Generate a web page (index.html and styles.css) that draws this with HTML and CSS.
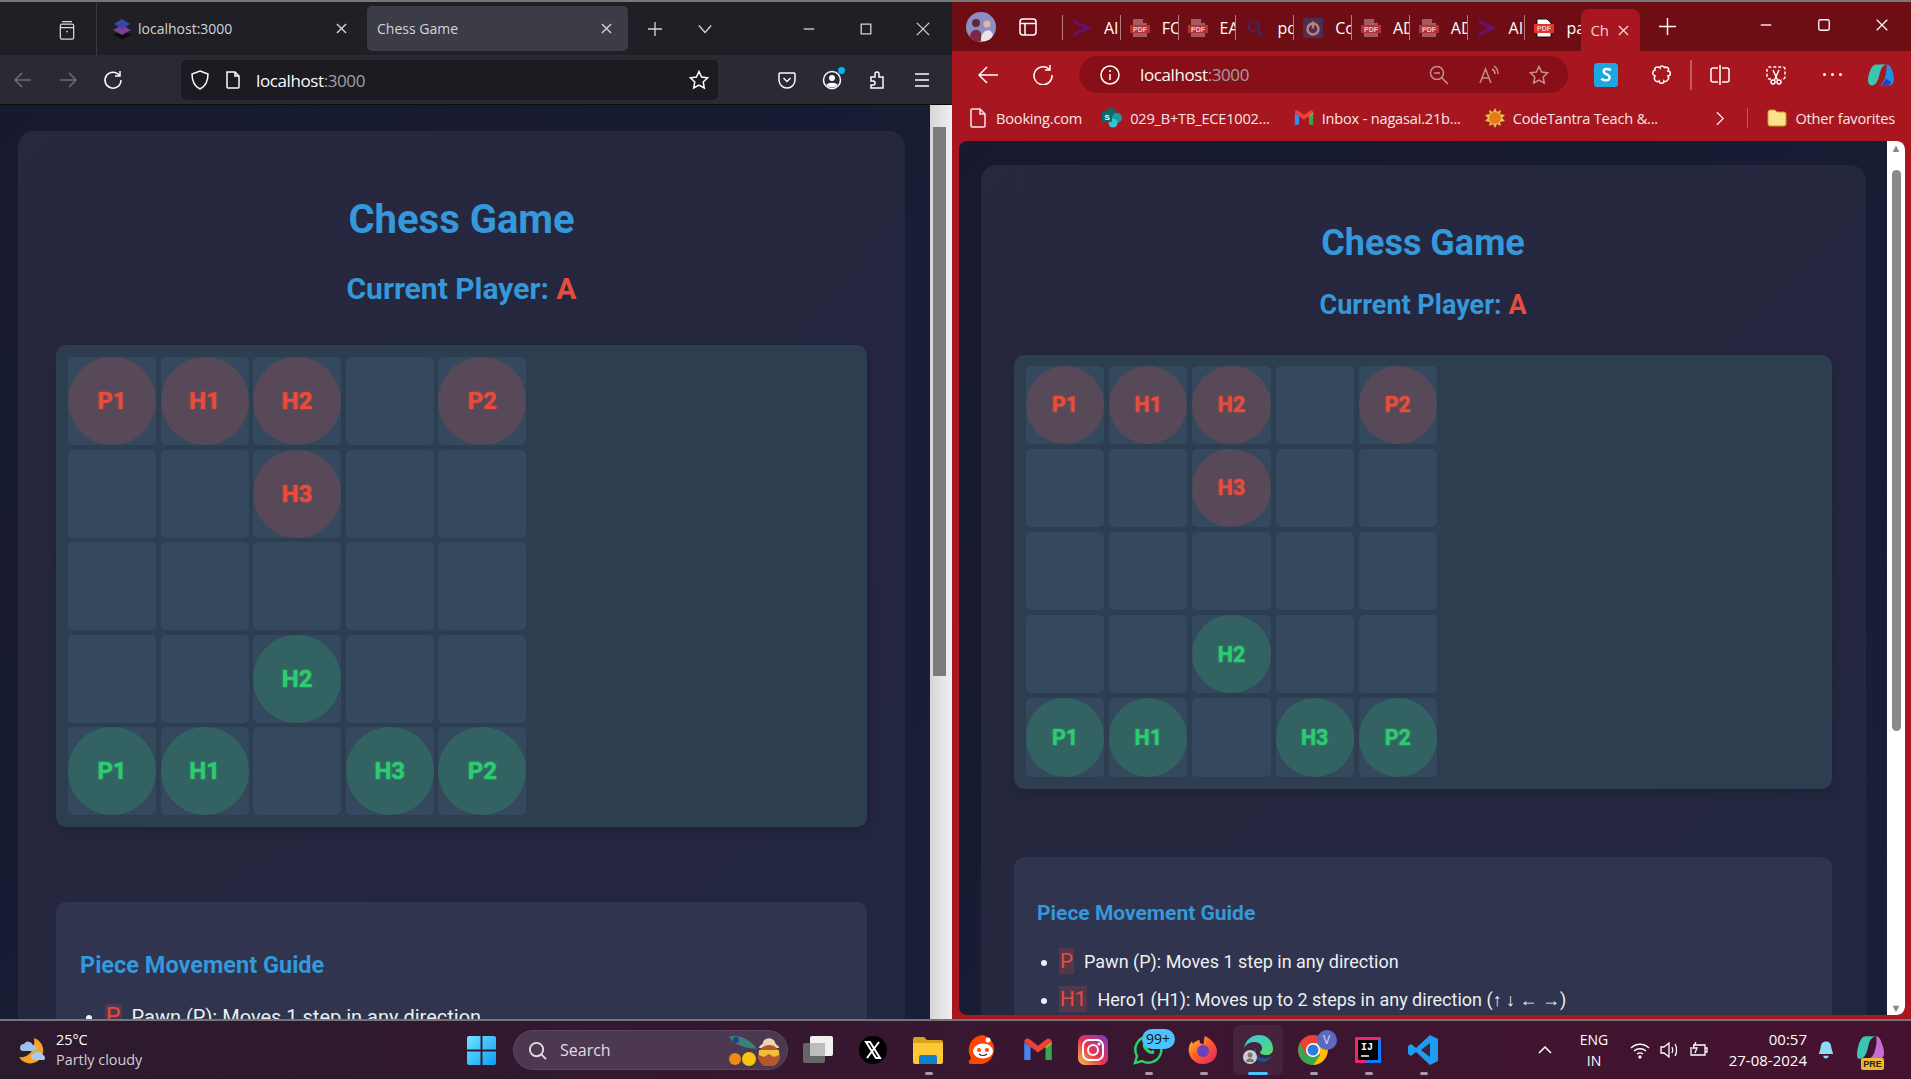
FILE: index.html
```html
<!DOCTYPE html>
<html lang="en">
<head>
    <meta charset="UTF-8">
    <title>Chess Game</title>
    <link rel="stylesheet" href="styles.css">
</head>
<body>
    <svg class="defs" width="0" height="0">
        <symbol id="pdf" viewBox="0 0 20 20">
            <path d="M3 1h10l4 4v14H3z" fill="#a35a60"/>
            <path d="M13 1v4h4z" fill="#6f0d14"/>
            <rect x="0" y="7" width="20" height="8" fill="#b3323a"/>
            <text x="10" y="13.6" text-anchor="middle" class="pdf-label">PDF</text>
        </symbol>
        <symbol id="vs" viewBox="0 0 20 20">
            <path d="M0 1l20 9L0 19l2-4 9-5-9-5z" fill="#68106f"/>
        </symbol>
        <symbol id="gmail" viewBox="0 0 24 20">
            <path d="M1 18V4l5 3.5V18z" fill="#4285f4"/>
            <path d="M23 18V4l-5 3.5V18z" fill="#34a853"/>
            <path d="M1 3.500C1 1 4 0 5.500 1.500L12 6.500l6.500-5C20 0 23 1 23 3.500L18 7.500l-6 4.500-6-4.500z" fill="#ea4335"/>
            <path d="M18 7.500l5-4V5l-5 3.500z" fill="#fbbc04"/>
        </symbol>
    </svg>

    <div class="desktop">
        <!-- left window: firefox -->
        <section class="window ff">
            <div class="ff-tabs">
                <div class="ff-side">
                    <svg class="ico" viewBox="0 0 20 24"><path d="M4 2h12M2 7a2 2 0 0 1 2-2h12a2 2 0 0 1 2 2v14a2 2 0 0 1-2 2H4a2 2 0 0 1-2-2zM2 9h16M9 14h2"/></svg>
                </div>
                <div class="ff-tab">
                    <svg class="fav-ico" viewBox="0 0 20 20"><path d="M10 11l9 5-9 4-9-4z" fill="#0b0b10"/><path d="M10 6l9 5-9 5-9-5z" fill="#7b3f98"/><path d="M10 0l8 5-8 5-8-5z" fill="#3b47a8"/></svg>
                    <span>localhost:3000</span>
                    <svg class="tab-x" viewBox="0 0 12 12"><path d="M1 1l10 10M11 1L1 11"/></svg>
                </div>
                <div class="ff-tab ff-tab-active">
                    <span>Chess Game</span>
                    <svg class="tab-x" viewBox="0 0 12 12"><path d="M1 1l10 10M11 1L1 11"/></svg>
                </div>
                <div class="ff-slot ff-plus"><svg class="ico-m" viewBox="0 0 16 16"><path d="M8 0v16M0 8h16"/></svg></div>
                <div class="ff-slot ff-more"><svg class="ico-m" viewBox="0 0 16 16"><path d="M1 4l7 8 7-8"/></svg></div>
                <div class="win-btns ff-btns">
                    <svg class="ico-m" viewBox="0 0 16 16"><path d="M2 8h12"/></svg>
                    <svg class="ico-m" viewBox="0 0 16 16"><path d="M2.500 2.500h11v11h-11z"/></svg>
                    <svg class="ico-m" viewBox="0 0 16 16"><path d="M1 1l14 14M15 1L1 15"/></svg>
                </div>
            </div>
            <div class="ff-toolbar">
                <div class="ff-nav ff-off"><svg class="ico" viewBox="0 0 20 20"><path d="M18 10H2M9 3l-7 7 7 7"/></svg></div>
                <div class="ff-nav ff-off"><svg class="ico" viewBox="0 0 20 20"><path d="M2 10h16M11 3l7 7-7 7"/></svg></div>
                <div class="ff-nav"><svg class="ico" viewBox="0 0 20 20"><path d="M16.500 5.500A8 8 0 1 0 18 10M17 1v5h-5"/></svg></div>
                <div class="ff-url">
                    <svg class="ico" viewBox="0 0 20 20"><path d="M10 1l8 3c0 7-2 12-8 15C4 16 2 11 2 4z"/></svg>
                    <svg class="ico" viewBox="0 0 20 20"><path d="M4 2h8l4 4v11a1 1 0 0 1-1 1H5a1 1 0 0 1-1-1zM12 2v4h4"/></svg>
                    <span class="url-text">localhost<i>:3000</i></span>
                    <svg class="ico ff-star" viewBox="0 0 20 20"><path d="M10 1.500l2.600 5.500 6 .8-4.400 4.200 1.100 6L10 15l-5.300 3 1.100-6L1.400 7.800l6-.8z"/></svg>
                </div>
                <div class="ff-right">
                    <div class="ff-tool"><svg class="ico" viewBox="0 0 20 20"><path d="M3 3h14a1 1 0 0 1 1 1v6a8 8 0 0 1-16 0V4a1 1 0 0 1 1-1zM6.500 8l3.500 3.500L13.500 8"/></svg></div>
                    <div class="ff-tool ff-profile">
                        <svg class="ico" viewBox="0 0 20 20"><circle cx="10" cy="10" r="8.500"/><circle cx="10" cy="8" r="3" class="solid"/><path d="M4.500 15c1-3 10-3 11 0-2 3-9 3-11 0z" class="solid"/></svg>
                        <span class="ff-dot"></span>
                    </div>
                    <div class="ff-tool"><svg class="ico" viewBox="0 0 20 20"><path d="M4 7h4V4a2 2 0 0 1 4 0v3h4v11H4v-3h2a2 2 0 0 0 0-4H4z"/></svg></div>
                    <div class="ff-tool"><svg class="ico" viewBox="0 0 20 20"><path d="M3 4h14M3 10h14M3 16h14"/></svg></div>
                </div>
            </div>
            <div class="ff-view">
                <main class="page page-wide">
                    <div class="game">
                        <h1>Chess Game</h1>
                        <h2>Current Player: <span class="red">A</span></h2>
                        <div class="board">
                            <div class="cell"><div class="piece a">P1</div></div>
                            <div class="cell"><div class="piece a">H1</div></div>
                            <div class="cell"><div class="piece a">H2</div></div>
                            <div class="cell"></div>
                            <div class="cell"><div class="piece a">P2</div></div>
                            <div class="cell"></div>
                            <div class="cell"></div>
                            <div class="cell"><div class="piece a">H3</div></div>
                            <div class="cell"></div>
                            <div class="cell"></div>
                            <div class="cell"></div>
                            <div class="cell"></div>
                            <div class="cell"></div>
                            <div class="cell"></div>
                            <div class="cell"></div>
                            <div class="cell"></div>
                            <div class="cell"></div>
                            <div class="cell"><div class="piece b">H2</div></div>
                            <div class="cell"></div>
                            <div class="cell"></div>
                            <div class="cell"><div class="piece b">P1</div></div>
                            <div class="cell"><div class="piece b">H1</div></div>
                            <div class="cell"></div>
                            <div class="cell"><div class="piece b">H3</div></div>
                            <div class="cell"><div class="piece b">P2</div></div>
                        </div>
                        <div class="guide">
                            <h3>Piece Movement Guide</h3>
                            <ul>
                                <li><span class="tag">P</span>Pawn (P): Moves 1 step in any direction</li>
                            </ul>
                        </div>
                    </div>
                </main>
                <div class="scrollbar sb-ff"><div class="thumb"></div></div>
            </div>
        </section>

        <!-- right window: edge -->
        <section class="window ed">
            <div class="ed-tabs">
                <svg class="avatar" viewBox="0 0 30 30">
                    <circle cx="15" cy="15" r="15" fill="#8d8fc4"/>
                    <circle cx="10" cy="11" r="4" fill="#5a2a3a"/>
                    <path d="M4 25c0-9 10-9 11-4v8H9z" fill="#7c2744"/>
                    <circle cx="21" cy="12" r="3.500" fill="#e0b8a6"/>
                    <path d="M15 29c0-12 10-14 12-6-2 5-7 7-12 6z" fill="#e8e4ea"/>
                </svg>
                <div class="ed-side"><svg class="ico" viewBox="0 0 20 20"><rect x="2" y="2" width="16" height="16" rx="3"/><path d="M7 6.500v11.500M2 6.500h16"/></svg></div>
                <div class="ed-tab"><svg class="tab-ico" viewBox="0 0 20 20"><use href="#vs"/></svg><span>AI</span></div>
                <div class="ed-tab"><svg class="tab-ico" viewBox="0 0 20 20"><use href="#pdf"/></svg><span>FC</span></div>
                <div class="ed-tab"><svg class="tab-ico" viewBox="0 0 20 20"><use href="#pdf"/></svg><span>EA</span></div>
                <div class="ed-tab"><svg class="tab-ico" viewBox="0 0 20 20"><circle cx="9" cy="9" r="5" fill="none" stroke="#3e2a63" stroke-width="2"/><path d="M13 13l4 4" stroke="#3e2a63" stroke-width="2"/></svg><span>pdf</span></div>
                <div class="ed-tab"><svg class="tab-ico" viewBox="0 0 20 20"><rect width="20" height="20" fill="#4a2f55"/><circle cx="10" cy="11" r="5.500" fill="none" stroke="#c27f78" stroke-width="2.500"/><path d="M10 3.500v7" stroke="#c27f78" stroke-width="2.500"/></svg><span>Co</span></div>
                <div class="ed-tab"><svg class="tab-ico" viewBox="0 0 20 20"><use href="#pdf"/></svg><span>AD</span></div>
                <div class="ed-tab"><svg class="tab-ico" viewBox="0 0 20 20"><use href="#pdf"/></svg><span>AD</span></div>
                <div class="ed-tab"><svg class="tab-ico" viewBox="0 0 20 20"><use href="#vs"/></svg><span>AI</span></div>
                <div class="ed-tab ed-tab-last">
                    <svg class="tab-ico" viewBox="0 0 20 20"><path d="M3 1h10l4 4v14H3z" fill="#fff" stroke="#111"/><rect y="6" width="20" height="9" rx="1" fill="#e5322d"/><text x="10" y="13.300" text-anchor="middle" class="pdf-label">PDF</text></svg>
                    <span>pa</span>
                </div>
                <div class="ed-active"><span>Ch</span><svg class="tab-x" viewBox="0 0 12 12"><path d="M1 1l10 10M11 1L1 11"/></svg></div>
                <div class="ed-plus"><svg class="ico-m" viewBox="0 0 18 18"><path d="M9 0v18M0 9h18"/></svg></div>
                <div class="win-btns ed-btns">
                    <svg class="ico-m" viewBox="0 0 16 16"><path d="M2 8h12"/></svg>
                    <svg class="ico-m" viewBox="0 0 16 16"><rect x="2" y="2" width="12" height="12" rx="2"/></svg>
                    <svg class="ico-m" viewBox="0 0 16 16"><path d="M2 2l12 12M14 2L2 14"/></svg>
                </div>
            </div>
            <div class="ed-toolbar">
                <div class="ed-nav"><svg class="ico" viewBox="0 0 20 20"><path d="M20 10H1M9 2l-8 8 8 8"/></svg></div>
                <div class="ed-nav"><svg class="ico" viewBox="0 0 20 20"><path d="M16 4a9 9 0 1 0 3 6M17 0v5h-5"/></svg></div>
                <div class="ed-url">
                    <svg class="ico" viewBox="0 0 20 20"><circle cx="10" cy="10" r="9"/><path d="M10 9v6M10 5v2"/></svg>
                    <span class="url-text">localhost<i>:3000</i></span>
                    <div class="ed-url-tools">
                        <svg class="ico" viewBox="0 0 20 20"><circle cx="8" cy="8" r="6.500"/><path d="M13 13l6 6M5 8h6"/></svg>
                        <svg class="ico" viewBox="0 0 20 20"><path d="M1 18L6.500 4 12 18M3 13h7M13 4c2 1 3 3 3 5M15 1c3 2 4 5 4 8"/></svg>
                        <svg class="ico" viewBox="0 0 20 20"><path d="M10 1.500l2.600 5.500 6 .8-4.400 4.200 1.100 6L10 15l-5.300 3 1.100-6L1.400 7.800l6-.8z"/></svg>
                    </div>
                </div>
                <div class="ed-tool ed-first">
                    <svg class="ico-lg" viewBox="0 0 20 20"><rect width="20" height="20" rx="3" fill="#1aa7e2"/><path d="M14 6c-2-1.500-6-1.500-6 1s5 2 5 5c0 3-5 3-7 1" fill="none" stroke="#fff" stroke-width="2"/></svg>
                </div>
                <div class="ed-tool"><svg class="ico" viewBox="0 0 20 20"><path d="M8 3c0-3 5-2 4 0 2-2 6 0 4 3 3 0 3 5 0 5 2 3-2 7-4 5 0 3-5 3-5 0-3 2-6-2-4-5-3-1-3-5 0-6-1-3 3-4 5-2z"/></svg></div>
                <div class="ed-sep"></div>
                <div class="ed-tool"><svg class="ico" viewBox="0 0 20 20"><path d="M10 0v20M8 3H3a2 2 0 0 0-2 2v10a2 2 0 0 0 2 2h5M12 3h5a2 2 0 0 1 2 2v10a2 2 0 0 1-2 2h-5"/></svg></div>
                <div class="ed-tool"><svg class="ico" viewBox="0 0 20 20"><path d="M5 14H3a2 2 0 0 1-2-2V4a2 2 0 0 1 2-2h14a2 2 0 0 1 2 2v8a2 2 0 0 1-2 2h-2" stroke-dasharray="3 2"/><path d="M7 5l4.500 10M13 5L8.500 15"/><circle cx="7" cy="17" r="2"/><circle cx="13" cy="17" r="2"/></svg></div>
                <div class="ed-tool ed-dots"><span></span><span></span><span></span></div>
                <div class="ed-tool ed-copilot">
                    <svg class="ico-lg" viewBox="0 0 24 24"><path d="M7 3h9c-4 1-5 4-6 8s-2 9-6 10H3C0 21-1 16 1 11c1-4 3-8 6-8z" fill="#3ac6b0"/><path d="M16 3c3 0 4 3 5 6 2 5 2 12-3 12H9c4-1 5-5 6-9 .7-3 1-7 1-9z" fill="#1f8fe0"/><path d="M9 21c3 0 5-2 6-6l5 3c-1 2-2 3-4 3z" fill="#2540c0"/></svg>
                </div>
            </div>
            <div class="ed-favs">
                <div class="fav"><svg class="fav-file" viewBox="0 0 16 20"><path d="M1 2a1 1 0 0 1 1-1h8l5 5v12a1 1 0 0 1-1 1H2a1 1 0 0 1-1-1zM10 1v5h5"/></svg><span>Booking.com</span></div>
                <div class="fav">
                    <svg class="fav-ico" viewBox="0 0 20 20"><circle cx="9" cy="6" r="6" fill="#0b6a70"/><circle cx="15" cy="10" r="5" fill="#1b9a9f"/><circle cx="11" cy="15" r="4.500" fill="#37c6d0"/><rect y="4" width="10" height="10" rx="1" fill="#036c70"/><text x="5" y="12" text-anchor="middle" class="sp-label">S</text></svg>
                    <span>029_B+TB_ECE1002...</span>
                </div>
                <div class="fav"><svg class="fav-ico" viewBox="0 0 24 20"><use href="#gmail"/></svg><span>Inbox - nagasai.21b...</span></div>
                <div class="fav">
                    <svg class="fav-ico" viewBox="0 0 20 20"><path d="M10 0l2 4 4-2-1 4 5 1-3 3 3 3-5 1 1 4-4-2-2 4-2-4-4 2 1-4-5-1 3-3-3-3 5-1-1-4 4 2z" fill="#e6c84b"/><circle cx="10" cy="10" r="6" fill="#e87a1d"/></svg>
                    <span>CodeTantra Teach &amp;...</span>
                </div>
                <div class="fav-end">
                    <svg class="fav-chev" viewBox="0 0 10 16"><path d="M1 1l7 7-7 7"/></svg>
                    <div class="fav-sep"></div>
                    <svg class="fav-ico" viewBox="0 0 20 18"><path d="M1 3a2 2 0 0 1 2-2h5l2 2h7a2 2 0 0 1 2 2v10a2 2 0 0 1-2 2H3a2 2 0 0 1-2-2z" fill="#fbe28a" stroke="#c69a1e"/></svg>
                    <span>Other favorites</span>
                </div>
            </div>
            <div class="ed-view">
                <main class="page page-narrow">
                    <div class="game">
                        <h1>Chess Game</h1>
                        <h2>Current Player: <span class="red">A</span></h2>
                        <div class="board">
                            <div class="cell"><div class="piece a">P1</div></div>
                            <div class="cell"><div class="piece a">H1</div></div>
                            <div class="cell"><div class="piece a">H2</div></div>
                            <div class="cell"></div>
                            <div class="cell"><div class="piece a">P2</div></div>
                            <div class="cell"></div>
                            <div class="cell"></div>
                            <div class="cell"><div class="piece a">H3</div></div>
                            <div class="cell"></div>
                            <div class="cell"></div>
                            <div class="cell"></div>
                            <div class="cell"></div>
                            <div class="cell"></div>
                            <div class="cell"></div>
                            <div class="cell"></div>
                            <div class="cell"></div>
                            <div class="cell"></div>
                            <div class="cell"><div class="piece b">H2</div></div>
                            <div class="cell"></div>
                            <div class="cell"></div>
                            <div class="cell"><div class="piece b">P1</div></div>
                            <div class="cell"><div class="piece b">H1</div></div>
                            <div class="cell"></div>
                            <div class="cell"><div class="piece b">H3</div></div>
                            <div class="cell"><div class="piece b">P2</div></div>
                        </div>
                        <div class="guide">
                            <h3>Piece Movement Guide</h3>
                            <ul>
                                <li><span class="tag">P</span>Pawn (P): Moves 1 step in any direction</li>
                                <li><span class="tag">H1</span>Hero1 (H1): Moves up to 2 steps in any direction (↑ ↓ ← →)</li>
                            </ul>
                        </div>
                    </div>
                </main>
                <div class="scrollbar sb-ed">
                    <span class="sb-arrow">▲</span>
                    <div class="thumb"></div>
                    <span class="sb-arrow sb-arrow-down">▼</span>
                </div>
            </div>
        </section>
    </div>

    <footer class="taskbar">
        <div class="weather">
            <svg class="tb-ico" viewBox="0 0 30 30"><path d="M17 3a13 13 0 1 1-15 19c8 2 17-6 15-19z" fill="#f2a324"/><path d="M3 13a4 4 0 0 1 4-4 5 5 0 0 1 9 1 3 3 0 0 1 1 6H6a3 3 0 0 1-3-3z" fill="#9cc0ea"/><path d="M14 22a3 3 0 0 1 3-3 5 5 0 0 1 9 1 3 3 0 0 1 1 5H17a3 3 0 0 1-3-3z" fill="#a9c9f0"/></svg>
            <div class="weather-text"><div>25°C</div><div class="weather-sub">Partly cloudy</div></div>
        </div>
        <div class="slot">
            <svg class="win-logo" viewBox="0 0 30 30">
                <defs><linearGradient id="win" x1="0" y1="0" x2="1" y2="1"><stop offset="0" stop-color="#6fe4ff"/><stop offset="1" stop-color="#0f9cf5"/></linearGradient></defs>
                <path d="M0 2a2 2 0 0 1 2-2h12v14H0zM16 0h12a2 2 0 0 1 2 2v12H16zM0 16h14v14H2a2 2 0 0 1-2-2zM16 16h14v12a2 2 0 0 1-2 2H16z" fill="url(#win)"/>
            </svg>
        </div>
        <div class="search">
            <svg class="search-ico" viewBox="0 0 20 20"><circle cx="9" cy="9" r="7"/><path d="M14 14l5 5"/></svg>
            <span>Search</span>
            <svg class="search-art" viewBox="0 0 52 32">
                <path d="M0 3c8-3 20 1 28 12C18 14 6 12 0 3z" fill="#3b7f7a"/>
                <circle cx="7" cy="6" r="3" fill="#213f8f"/>
                <path d="M30 14c0-3 4-3 4-6 2-5 10-5 12 0 0 3 4 3 4 6z" fill="#e9d7b4"/>
                <circle cx="40" cy="22" r="11" fill="#b5562c"/>
                <path d="M30 16h20v5l-5 2-5-3-5 3-5-2z" fill="#efc13a"/>
                <circle cx="6" cy="25" r="6" fill="#f08a12"/>
                <circle cx="20" cy="25" r="7" fill="#f6c40f"/>
            </svg>
        </div>
        <div class="tb-apps">
            <div class="slot"><svg class="tb-ico" viewBox="0 0 30 30"><rect x="0" y="8" width="22" height="20" rx="2" fill="#666"/><rect x="7" y="1" width="23" height="20" rx="2" fill="#f1f1f1"/><rect x="7" y="8" width="15" height="13" fill="#bdbdbd"/></svg></div>
            <div class="slot"><svg class="tb-ico" viewBox="0 0 30 30"><circle cx="15" cy="15" r="14" fill="#000"/><path d="M8 7h4l10 16h-4zM21 7l-12 16" fill="none" stroke="#fff" stroke-width="2"/></svg></div>
            <div class="slot slot-dot"><svg class="tb-ico" viewBox="0 0 30 28"><path d="M0 3a2 2 0 0 1 2-2h9l3 3h14a2 2 0 0 1 2 2v3H0z" fill="#d9a21b"/><path d="M0 7h30v19a2 2 0 0 1-2 2H2a2 2 0 0 1-2-2z" fill="#fcc934"/><path d="M6 21a2 2 0 0 1 2-2h14a2 2 0 0 1 2 2v7H6z" fill="#0f7fc7"/></svg></div>
            <div class="slot"><svg class="tb-ico" viewBox="0 0 30 30"><path d="M15 0a15 15 0 0 1 0 29H3c-2 0-3-2-2-3l2-3A15 15 0 0 1 15 0z" fill="#ff4500"/><ellipse cx="15" cy="16" rx="10" ry="7.500" fill="#fff"/><circle cx="11" cy="15" r="2" fill="#ff4500"/><circle cx="19" cy="15" r="2" fill="#ff4500"/><path d="M11 19c2 2 6 2 8 0" fill="none" stroke="#333" stroke-width="1.200"/><circle cx="20" cy="5" r="2.500" fill="#fff"/></svg></div>
            <div class="slot"><svg class="tb-ico" viewBox="0 0 24 20"><use href="#gmail"/></svg></div>
            <div class="slot">
                <svg class="tb-ico" viewBox="0 0 30 30">
                    <defs><linearGradient id="ig" x1="0" y1="1" x2="1" y2="0"><stop offset="0" stop-color="#fdc04f"/><stop offset=".45" stop-color="#e8344e"/><stop offset="1" stop-color="#7d3bc6"/></linearGradient></defs>
                    <rect width="30" height="30" rx="7" fill="url(#ig)"/>
                    <rect x="5" y="5" width="20" height="20" rx="6" fill="none" stroke="#fff" stroke-width="2"/>
                    <circle cx="15" cy="15" r="5" fill="none" stroke="#fff" stroke-width="2"/>
                    <circle cx="21" cy="9" r="1.500" fill="#fff"/>
                </svg>
            </div>
            <div class="slot slot-dot">
                <svg class="tb-ico" viewBox="0 0 30 30"><path d="M2 28l2-7A13 13 0 1 1 9 26z" fill="none" stroke="#25d366" stroke-width="2.500"/><path d="M10 9c-2 3 5 11 10 10 2-1 2-3 0-4l-2 1c-2-1-3-2-4-4l1-2c-1-2-3-3-5-1z" fill="#25d366"/></svg>
                <span class="count">99+</span>
            </div>
            <div class="slot slot-dot">
                <svg class="tb-ico" viewBox="0 0 30 30">
                    <defs><linearGradient id="fx" x1="0" y1="0" x2="1" y2="1"><stop offset="0" stop-color="#ffc12e"/><stop offset=".5" stop-color="#ff5a2a"/><stop offset="1" stop-color="#e01f6b"/></linearGradient></defs>
                    <path d="M15 29A14 14 0 0 1 2 9l2-3 1 3c2-3 5-4 7-4-1 2 0 3 2 4 3 1 1-4 3-8 6 3 12 9 12 15 0 8-6 13-14 13z" fill="url(#fx)"/>
                    <circle cx="15" cy="16" r="6" fill="#6a3fc0"/>
                </svg>
            </div>
            <div class="slot slot-on">
                <svg class="tb-ico" viewBox="0 0 30 30">
                    <defs><linearGradient id="ed" x1="0" y1="0" x2="1" y2="1"><stop offset="0" stop-color="#36c6f0"/><stop offset="1" stop-color="#57dc62"/></linearGradient></defs>
                    <path d="M1 14C2 5 9 0 16 0c8 0 14 6 14 14 0 4-3 6-7 6-3 0-6-1-6-3 1-1 2-2 2-4 0-4-4-6-8-6-5 0-9 3-10 7z" fill="url(#ed)"/>
                    <path d="M16 26c4 2 10 0 13-5-4 3-10 3-13 1-3-2-4-5-3-9-4 3-3 10 3 13z" fill="#0c59a4"/>
                    <circle cx="7" cy="22" r="7" fill="#ccc"/><circle cx="7" cy="20" r="2.500" fill="#777"/><path d="M3 27c0-5 8-5 8 0z" fill="#777"/>
                </svg>
            </div>
            <div class="slot slot-dot">
                <svg class="tb-ico" viewBox="0 0 30 30">
                    <circle cx="15" cy="15" r="15" fill="#ea4335"/>
                    <path d="M15 30A15 15 0 0 0 28 8H15l7 12z" fill="#fbbc04"/>
                    <path d="M2 8a15 15 0 0 0 13 22l7-10H8z" fill="#34a853"/>
                    <circle cx="15" cy="15" r="7" fill="#fff"/><circle cx="15" cy="15" r="5.500" fill="#2a7de1"/>
                </svg>
                <span class="chrome-badge">V</span>
            </div>
            <div class="slot slot-dot">
                <svg class="tb-ico tb-ico-ij" viewBox="0 0 26 26">
                    <rect width="26" height="26" fill="#f2246a"/><path d="M26 0v26H10z" fill="#087cfa"/>
                    <rect x="3" y="3" width="20" height="20" fill="#000"/>
                    <text x="6" y="13" class="ij-label">IJ</text>
                    <path d="M6 19h8" stroke="#fff" stroke-width="1.500"/>
                </svg>
            </div>
            <div class="slot slot-dot"><svg class="tb-ico" viewBox="0 0 30 30"><path d="M22 0l8 4v22l-8 4L8 17l-5 4-3-2v-8l3-2 5 4z" fill="#1f9cf0"/><path d="M22 8l-9 7 9 7z" fill="#3d2134"/></svg></div>
        </div>
        <div class="tray">
            <svg class="tray-chev" viewBox="0 0 14 10"><path d="M1 8l6-6 6 6"/></svg>
            <div class="lang"><div>ENG</div><div>IN</div></div>
            <div class="tray-icons">
                <svg class="tray-ico" viewBox="0 0 20 20"><path d="M1 8c5-5 13-5 18 0M4 11c3-3 9-3 12 0M7 14c2-1.500 4-1.500 6 0"/><circle cx="10" cy="17" r="1"/></svg>
                <svg class="tray-ico" viewBox="0 0 20 20"><path d="M2 7h3l5-4v14l-5-4H2zM13 7c1 2 1 4 0 6M16 4c2 3 2 9 0 12"/></svg>
                <svg class="tray-ico" viewBox="0 0 20 20"><path d="M5 5h12v10H3V7M17 8h2v4h-2M8 2L5 8h4l-2 5"/></svg>
            </div>
            <div class="clock"><div>00:57</div><div>27-08-2024</div></div>
            <svg class="tray-bell" viewBox="0 0 18 22"><path d="M9 1c4 0 6 3 6 7l2 7H1l2-7c0-4 2-7 6-7z" fill="#8fdcf7"/><path d="M6 17h6c0 4-6 4-6 0z" fill="#8fdcf7"/></svg>
            <div class="pre">
                <svg class="tb-ico" viewBox="0 0 24 24"><path d="M7 1h8c-4 1-5 4-6 8s-2 9-6 10H2C-1 19 0 13 1 9c1-4 3-8 6-8z" fill="#3ac6b0"/><path d="M15 1c3 0 4 3 5 6 2 5 3 12-2 12H9c4-1 5-5 6-9 .7-3 1-7 0-9z" fill="#c76bd9"/></svg>
                <span class="pre-tag">PRE</span>
            </div>
        </div>
    </footer>
</body>
</html>
```

FILE: styles.css
```css
* {
    box-sizing: border-box;
}
html, body {
    margin: 0;
    padding: 0;
    height: 100%;
    overflow: hidden;
    font-family: "Open Sans", sans-serif;
}
body {
    display: flex;
    flex-direction: column;
    background-color: #2d1a2e;
}
.defs {
    position: absolute;
}
svg {
    flex-shrink: 0;
    display: block;
}
.pdf-label {
    font: 700 7px "Liberation Sans", sans-serif;
    fill: #e9c9c9;
}
.sp-label {
    font: 700 8px "Liberation Sans", sans-serif;
    fill: #fff;
}
.ij-label {
    font: 700 10px "Liberation Mono", monospace;
    fill: #fff;
}

/* icons */
.ico, .ico-m, .tab-x, .fav-file, .fav-chev {
    fill: none;
    stroke: currentColor;
    stroke-width: 1.5;
}
.ico {
    width: 20px;
    height: 20px;
}
.ico .solid {
    fill: currentColor;
    stroke: none;
}
.ico-m {
    width: 14px;
    height: 14px;
}
.ico-lg {
    width: 24px;
    height: 24px;
}
.tab-x {
    width: 11px;
    height: 11px;
}
.fav-ico {
    width: 20px;
    height: 20px;
}
.win-btns {
    margin-left: auto;
    display: flex;
    align-items: center;
}

.desktop {
    height: 1021px;
    flex-shrink: 0;
    display: flex;
    border-bottom: 2px solid #77737a;
}
.window {
    display: flex;
    flex-direction: column;
    height: 100%;
    border-top: 2px solid #77777a;
}

/* firefox */
.ff {
    width: 952px;
    background-color: #1f1f26;
    color: #fbfbfe;
}
.ff-tabs {
    height: 53px;
    display: flex;
    align-items: center;
    flex-shrink: 0;
    font-size: 14px;
}
.ff-side {
    width: 97px;
    height: 100%;
    padding: 2px 0 0 57px;
    display: flex;
    align-items: center;
    border-right: 1px solid #3a3a42;
    color: #d8d8dc;
}
.ff-tab {
    width: 265px;
    height: 45px;
    padding: 0 15px 0 15px;
    display: flex;
    align-items: center;
    gap: 6px;
    color: #d4d4d8;
}
.ff-tab .tab-x {
    margin-left: auto;
}
.ff-tab-active {
    width: 261px;
    margin-left: 5px;
    padding-left: 10px;
    padding-right: 16px;
    background-color: #3c3c46;
    border-radius: 5px;
}
.ff-slot {
    display: flex;
    justify-content: center;
    color: #d4d4d8;
}
.ff-plus {
    width: 54px;
}
.ff-more {
    width: 46px;
}
.ff-btns {
    padding-right: 1px;
    color: #d4d4d8;
}
.ff-btns svg {
    margin: 0 21.500px;
}
.ff-toolbar {
    height: 50px;
    flex-shrink: 0;
    display: flex;
    align-items: center;
    padding-top: 1px;
    background-color: #2b2a33;
    border-bottom: 1px solid #0c0c0d;
}
.ff-nav {
    width: 45px;
    display: flex;
    justify-content: center;
}
.ff-off {
    color: #6d6d75;
}
.ff-url {
    width: 537px;
    height: 40px;
    margin-left: 46px;
    padding: 0 9px;
    display: flex;
    align-items: center;
    gap: 13px;
    background-color: #1c1b22;
    border-radius: 5px;
}
.url-text {
    font-size: 17px;
    letter-spacing: -0.400px;
    color: #fbfbfe;
}
.url-text i {
    font-style: normal;
    color: #a0a0a6;
}
.ff-star {
    margin-left: auto;
}
.ff-right {
    margin-left: 46px;
    display: flex;
}
.ff-tool {
    width: 45px;
    display: flex;
    justify-content: center;
    position: relative;
}
.ff-dot {
    position: absolute;
    top: -3px;
    right: 9px;
    width: 7px;
    height: 7px;
    border-radius: 50%;
    background-color: #00b3f4;
}
.ff-view {
    flex: 1;
    min-height: 0;
    display: flex;
}

/* the chess page, both windows show the same one */
.page {
    flex: 1;
    min-width: 0;
    overflow: hidden;
    background: linear-gradient(135deg, #16192f, #1a1f38);
    --cell: 88px;
    --gap: 4.600px;
}
.page-wide {
    padding: 26px 25px 0 18px;
}
.page-narrow {
    padding: 24px 21px 0 22px;
    --cell: 78.200px;
    --gap: 5px;
}
.game {
    padding: 65px 38px 0;
    border-radius: 16px 16px 0 0;
    background: linear-gradient(135deg, #27283e, #232640);
}
.page-narrow .game {
    padding: 57px 34px 0 33px;
}
h1 {
    margin: 0;
    text-align: center;
    font: 700 40px/1.2 Roboto, sans-serif;
    color: #3498db;
}
h2 {
    margin: 27px 0 38px;
    text-align: center;
    font: 700 30px/1.2 Roboto, sans-serif;
    color: #3498db;
}
.page-narrow h1 {
    font-size: 36px;
}
.page-narrow h2 {
    margin: 24px 0 33px;
    font-size: 27px;
}
.red {
    color: #e74c3c;
}
.board {
    display: grid;
    grid-template-columns: repeat(5, var(--cell));
    grid-auto-rows: var(--cell);
    gap: var(--gap);
    padding: 12px;
    background-color: #2c3e50;
    border-radius: 10px;
    box-shadow: 0 4px 12px rgba(0, 0, 0, 0.15);
}
.page-narrow .board {
    padding: 11px 12px 12px;
}
.cell {
    background-color: #34495e;
    border-radius: 5px;
}
.piece {
    width: 100%;
    height: 100%;
    display: flex;
    align-items: center;
    justify-content: center;
    border-radius: 50%;
    font: 700 24px Roboto, sans-serif;
    text-shadow: 0 0 2px currentColor;
}
.page-narrow .piece {
    font-size: 21.500px;
}
.piece.a {
    background-color: rgba(231, 76, 60, 0.2);
    color: #e74c3c;
}
.piece.b {
    background-color: rgba(46, 204, 113, 0.2);
    color: #2ecc71;
}
.guide {
    margin-top: 75px;
    padding: 49px 24px 0;
    min-height: 200px;
    border-radius: 10px;
    background-color: #30344e;
}
.page-narrow .guide {
    margin-top: 68px;
    padding: 44px 23px 0;
}
h3 {
    margin: 0 0 24px;
    font: 700 23.500px/1.2 Roboto, sans-serif;
    color: #3498db;
}
.page-narrow h3 {
    font-size: 21px;
    margin-bottom: 22px;
}
.guide ul {
    margin: 0;
    padding-left: 25px;
    font: 400 20px/26px Roboto, sans-serif;
    color: #ecf0f1;
}
.page-narrow .guide ul {
    padding-left: 22px;
    font-size: 18px;
}
.guide li {
    margin-bottom: 11px;
}
.tag {
    display: inline-block;
    padding: 0 1px;
    margin-right: 10px;
    font-size: 1.150em;
    color: #e74c3c;
    background-color: rgba(231, 76, 60, 0.2);
}

/* scrollbars */
.scrollbar {
    display: flex;
    flex-direction: column;
    align-items: center;
    flex-shrink: 0;
}
.sb-ff {
    width: 22px;
    padding-right: 3px;
    background: linear-gradient(90deg, #d6d6d6, #f0f0f0);
}
.sb-ff .thumb {
    width: 13px;
    height: 549px;
    margin-top: 22px;
    background-color: #7b7b7b;
}
.sb-ed {
    width: 18px;
    background-color: #fff;
    border-radius: 0 8px 8px 0;
    color: #8a8a8a;
    font-size: 11px;
    line-height: 14px;
}
.sb-ed .thumb {
    width: 9px;
    height: 561px;
    margin-top: 15px;
    border-radius: 5px;
    background-color: #8a8a8a;
}
.sb-arrow {
    display: block;
}
.sb-arrow-down {
    margin-top: auto;
}

/* edge */
.ed {
    width: 959px;
    background-color: #a8161f;
    color: #fff;
}
.ed-tabs {
    height: 49px;
    flex-shrink: 0;
    display: flex;
    align-items: center;
    padding-left: 14px;
    background-color: #6f0d14;
    font-size: 16px;
}
.avatar {
    width: 30px;
    height: 30px;
}
.ed-side {
    width: 32px;
    margin: 0 18px 0 16px;
    display: flex;
    justify-content: center;
}
.ed-tab {
    width: 57.800px;
    height: 25px;
    padding-left: 9px;
    display: flex;
    align-items: center;
    gap: 12px;
    overflow: hidden;
    white-space: nowrap;
    border-left: 1px solid #b77a7e;
    margin-top: 2px;
}
.ed-tab-last {
    width: 57px;
}
.tab-ico {
    width: 20px;
    height: 20px;
    flex-shrink: 0;
}
.ed-active {
    width: 59px;
    height: 42px;
    margin-top: 7px;
    padding: 0 13px 0 9px;
    display: flex;
    align-items: center;
    gap: 9px;
    border-radius: 8px 8px 0 0;
    background-color: #a8161f;
    color: #f0d0d2;
    font-size: 15px;
}
.ed-plus {
    width: 54px;
    display: flex;
    justify-content: center;
}
.ed-plus .ico-m {
    width: 17px;
    height: 17px;
}
.ed-btns svg {
    margin: -4px 22px 0;
}
.ed-toolbar {
    height: 44px;
    flex-shrink: 0;
    display: flex;
    align-items: center;
    padding: 3px 0 0 8px;
}
.ed-nav {
    width: 55px;
    display: flex;
    justify-content: center;
}
.ed-url {
    width: 489px;
    height: 37px;
    margin-left: 9px;
    padding-left: 21px;
    display: flex;
    align-items: center;
    gap: 20px;
    border-radius: 19px;
    background-color: #880f18;
}
.ed-url-tools {
    margin-left: auto;
    padding-right: 19px;
    display: flex;
    gap: 30px;
    color: #c98c90;
}
.ed-tool {
    width: 56px;
    display: flex;
    justify-content: center;
    align-items: center;
}
.ed-first {
    margin-left: 10px;
}
.ed-sep {
    width: 2px;
    height: 30px;
    background-color: #c5585f;
}
.ed-dots {
    gap: 5px;
}
.ed-dots span {
    width: 3px;
    height: 3px;
    border-radius: 50%;
    background-color: #fff;
}
.ed-copilot {
    width: 44px;
}
.ed-copilot .ico-lg {
    width: 28px;
    height: 28px;
}
.ed-favs {
    height: 46px;
    flex-shrink: 0;
    display: flex;
    align-items: center;
    padding: 0 16px 0 18px;
    font-size: 14.600px;
    letter-spacing: -0.200px;
    color: #f6e6e7;
    white-space: nowrap;
}
.fav {
    display: flex;
    align-items: center;
    gap: 8px;
    margin-right: 24px;
}
.fav:first-child {
    gap: 10px;
    margin-right: 20px;
}
.fav-file {
    width: 16px;
    height: 20px;
}
.fav-end {
    margin-left: auto;
    display: flex;
    align-items: center;
    gap: 8px;
}
.fav-chev {
    width: 9px;
    height: 15px;
}
.fav-sep {
    width: 1px;
    height: 20px;
    margin: 0 11px 0 14px;
    background-color: #c5585f;
}
.ed-view {
    flex: 1;
    min-height: 0;
    margin: 0 6px 4px 7px;
    display: flex;
    border-radius: 8px;
    overflow: hidden;
}

/* taskbar */
.taskbar {
    flex: 1;
    display: flex;
    align-items: center;
    color: #fff;
    background: linear-gradient(90deg, #2c1a2e, #3a1630 60%, #46122f);
}
.weather {
    width: 453.500px;
    padding-left: 17px;
    display: flex;
    align-items: center;
    gap: 9px;
    font-size: 14.400px;
    line-height: 20px;
}
.weather-sub {
    color: #d4cdd4;
}
.tb-ico {
    width: 30px;
    height: 30px;
}
.tb-ico-ij {
    width: 26px;
    height: 26px;
}
.slot {
    width: 55px;
    height: 50px;
    display: flex;
    align-items: center;
    justify-content: center;
    position: relative;
}
.slot-dot::after, .slot-on::after {
    content: "";
    position: absolute;
    bottom: 0;
    left: 24px;
    width: 8px;
    height: 3px;
    border-radius: 2px;
    background-color: #a89ca6;
}
.slot-on {
    background-color: rgba(255, 255, 255, 0.06);
    border-radius: 6px;
    width: 50px;
    margin: 0 2.500px;
}
.slot-on::after {
    left: 15px;
    width: 20px;
    background-color: #4cc2ff;
}
.win-logo {
    width: 29px;
    height: 29px;
}
.search {
    width: 275px;
    height: 40px;
    margin-left: 4.500px;
    padding: 0 6px 0 14px;
    display: flex;
    align-items: center;
    gap: 13px;
    font-size: 16px;
    color: #e2dce2;
    border-radius: 20px;
    border: 1px solid #5c4560;
    background-color: #4c3850;
}
.search-ico {
    width: 19px;
    height: 19px;
    fill: none;
    stroke: #ddd;
    stroke-width: 2;
}
.search-art {
    width: 52px;
    height: 32px;
    margin-left: auto;
}
.tb-apps {
    display: flex;
    margin-left: 2.500px;
    align-items: center;
}
.count {
    position: absolute;
    top: 4px;
    left: 21px;
    width: 33px;
    height: 20px;
    border-radius: 10px;
    background-color: #4cc2ff;
    color: #111;
    font-size: 14px;
    line-height: 20px;
    text-align: center;
}
.chrome-badge {
    position: absolute;
    top: 5px;
    left: 31px;
    width: 20px;
    height: 20px;
    border-radius: 50%;
    background-color: #5a6abf;
    color: #d8dcf5;
    font-size: 12px;
    line-height: 20px;
    text-align: center;
}
.tray {
    margin-left: auto;
    padding-right: 24px;
    display: flex;
    align-items: center;
    font-size: 14px;
    line-height: 21px;
}
.tray-chev {
    width: 14px;
    height: 10px;
    fill: none;
    stroke: #fff;
    stroke-width: 1.500;
}
.lang {
    width: 50px;
    margin-left: 17px;
    text-align: center;
}
.tray-icons {
    display: flex;
    gap: 9px;
    margin-left: 11px;
}
.tray-ico {
    width: 20px;
    height: 20px;
    fill: none;
    stroke: #fff;
    stroke-width: 1.300;
}
.clock {
    width: 90px;
    margin-left: 9px;
    text-align: right;
    font-size: 15px;
}
.tray-bell {
    width: 16px;
    height: 21px;
    margin-left: 11px;
}
.pre {
    margin-left: 23px;
    position: relative;
}
.pre-tag {
    position: absolute;
    left: 4px;
    bottom: -5px;
    width: 23px;
    height: 12px;
    border-radius: 2px;
    background-color: #e9b92e;
    color: #222;
    font: 700 9px/12px "Liberation Sans", sans-serif;
    text-align: center;
}
```
